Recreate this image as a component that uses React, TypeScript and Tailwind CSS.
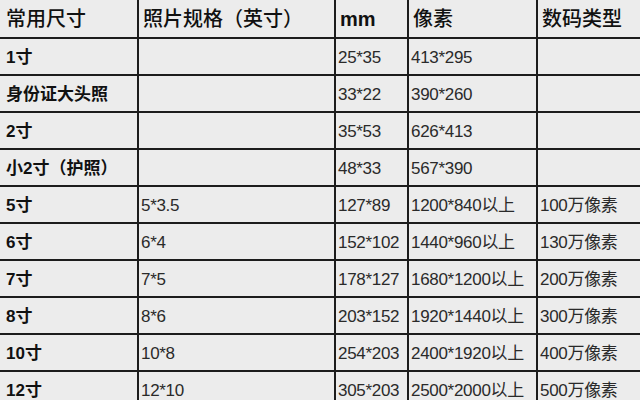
const header = ["常用尺寸", "照片规格（英寸）", "mm", "像素", "数码类型"];

const rows: [string, string, string, string, string][] = [
  ["1寸", "", "25*35", "413*295", ""],
  ["身份证大头照", "", "33*22", "390*260", ""],
  ["2寸", "", "35*53", "626*413", ""],
  ["小2寸（护照）", "", "48*33", "567*390", ""],
  ["5寸", "5*3.5", "127*89", "1200*840以上", "100万像素"],
  ["6寸", "6*4", "152*102", "1440*960以上", "130万像素"],
  ["7寸", "7*5", "178*127", "1680*1200以上", "200万像素"],
  ["8寸", "8*6", "203*152", "1920*1440以上", "300万像素"],
  ["10寸", "10*8", "254*203", "2400*1920以上", "400万像素"],
  ["12寸", "12*10", "305*203", "2500*2000以上", "500万像素"],
];

const font = { fontFamily: "'Liberation Sans','Noto Sans CJK SC',sans-serif" };

export default function App() {
  return (
    <div className="w-[640px] h-[400px] overflow-hidden bg-[#ececec]" style={font}>
      <div className="grid grid-cols-[137px_195px_71px_127px_1fr] gap-x-[2px] gap-y-[2px] bg-[#1c1c1c] pb-[2px]">
        {header.map((h, i) => (
          <div
            key={h}
            className={`h-[37px] bg-[#ececec] flex items-center text-[20px] text-[#111] ${i === 0 ? "pl-[6px]" : "pl-[4px]"} ${i === 2 ? "font-bold" : "font-medium"}`}
          >
            {h}
          </div>
        ))}
        {rows.map((r) =>
          r.map((c, i) => (
            <div
              key={r[0] + i}
              className={`h-[35px] bg-[#ececec] flex items-center pt-[3px] ${
                i === 0
                  ? "pl-[6px] text-[17px] font-bold text-[#111]"
                  : "pl-[2px] text-[17px] text-[#2a2a2a] tracking-[-0.3px]"
              }`}
            >
              {c}
            </div>
          ))
        )}
      </div>
    </div>
  );
}
